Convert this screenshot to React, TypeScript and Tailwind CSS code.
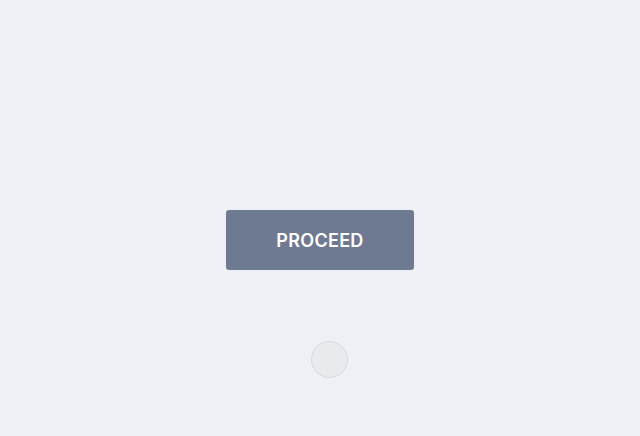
export default function App() {
  return (
    <div className="h-[436px] w-[640px] overflow-hidden bg-[#edf0f4] font-['Inter','Liberation_Sans',sans-serif]">
      <div className="flex flex-col items-center pt-[210px]">
        <button
          type="button"
          className="flex h-[60px] w-[188px] items-center justify-center rounded-[3px] bg-[#6e7a92] pt-px text-[18px] font-semibold tracking-[0.3px] text-white"
        >
          PROCEED
        </button>
        {/* progress dot, sits a touch right of centre */}
        <div className="mt-[71px] ml-[18px] h-[37px] w-[37px] rounded-full border border-[#d6d8dc] bg-[#e9eaee]" />
      </div>
    </div>
  );
}
